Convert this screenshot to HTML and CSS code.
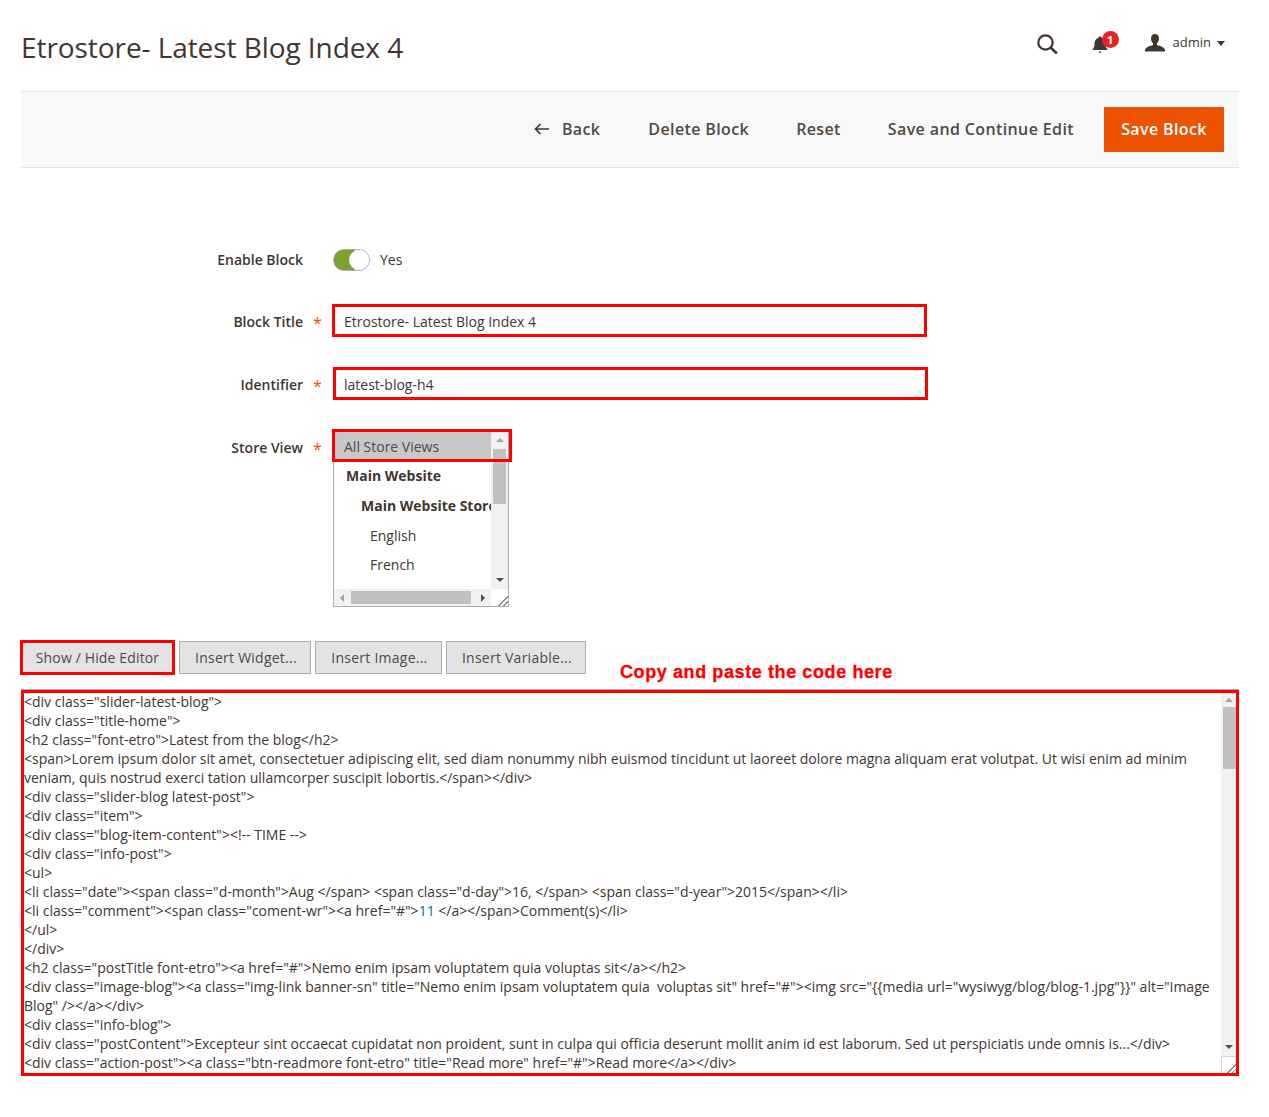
FILE: index.html
```html
<!DOCTYPE html>
<html lang="en">
<head>
<meta charset="utf-8">
<title>Etrostore- Latest Blog Index 4</title>
<link rel="stylesheet" href="styles.css">
</head>
<body>
<div class="page">
  <header class="top">
    <h1 class="title">Etrostore- Latest Blog Index 4</h1>
    <div class="tools">
      <svg class="ico-search" width="21" height="20" viewBox="0 0 21 20"><circle cx="8.500" cy="8.500" r="7.200" fill="none" stroke="#41362f" stroke-width="2.200"/><path d="M13.800 13.800l6 5.700" stroke="#41362f" stroke-width="2.600" fill="none"/></svg>
      <div class="bell">
        <svg width="18" height="20" viewBox="0 0 18 20"><path d="M9 1.500c1 0 1.600.7 1.700 1.600C13.300 3.900 14.500 6 14.500 9c0 3 .8 4.500 2.500 6H1c1.700-1.500 2.500-3 2.500-6 0-3 1.200-5.100 3.800-5.900C7.400 2.200 8 1.500 9 1.500z" fill="#41362f"/><path d="M7.500 16.500h3L9 18.500z" fill="#41362f"/></svg>
        <span class="badge">1</span>
      </div>
      <div class="user">
        <svg width="20" height="18" viewBox="0 0 20 18"><path d="M10 0c2.600 0 4 1.900 4 4.500 0 2-.8 3.800-2 4.800v1.600c2 .9 7.500 1.700 8 5.100v1.500H0v-1.500c.5-3.400 6-4.200 8-5.100V9.300C6.800 8.300 6 6.500 6 4.500 6 1.900 7.400 0 10 0z" fill="#41362f"/></svg>
        <span class="user-name">admin</span>
        <span class="caret"></span>
      </div>
    </div>
  </header>

  <div class="actions">
    <a class="act act-back"><svg width="16" height="12" viewBox="0 0 16 12"><path d="M15 6H2M6.500 1L1.500 6l5 5" fill="none" stroke="#41362f" stroke-width="1.700"/></svg>Back</a>
    <a class="act">Delete Block</a>
    <a class="act">Reset</a>
    <a class="act">Save and Continue Edit</a>
    <a class="btn-save">Save Block</a>
  </div>

  <form class="form">
    <div class="row row-toggle">
      <label class="lbl">Enable Block</label>
      <div class="req"></div>
      <div class="toggle"><span class="knob"></span></div>
      <span class="yes">Yes</span>
    </div>
    <div class="row row-title">
      <label class="lbl">Block Title</label>
      <div class="req">*</div>
      <div class="field field-a">Etrostore- Latest Blog Index 4</div>
    </div>
    <div class="row row-id">
      <label class="lbl">Identifier</label>
      <div class="req">*</div>
      <div class="field field-b">latest-blog-h4</div>
    </div>
    <div class="row row-store">
      <label class="lbl">Store View</label>
      <div class="req">*</div>
      <div class="select">
        <div class="select-main">
          <div class="opts">
            <div class="opt opt-all">All Store Views</div>
            <div class="opt opt-g1">Main Website</div>
            <div class="opt opt-g2">Main Website Store</div>
            <div class="opt opt-v">English</div>
            <div class="opt opt-v">French</div>
          </div>
          <div class="vbar">
            <span class="arr arr-up"></span>
            <div class="vtrack"><span class="vthumb"></span></div>
            <span class="arr arr-down"></span>
          </div>
        </div>
        <div class="hbar">
          <span class="arr arr-left"></span>
          <span class="hthumb"></span>
          <span class="arr arr-right"></span>
          <span class="corner"></span>
        </div>
      </div>
    </div>

    <div class="editor-btns">
      <button type="button" class="ebtn ebtn-red">Show / Hide Editor</button>
      <button type="button" class="ebtn">Insert Widget...</button>
      <button type="button" class="ebtn">Insert Image...</button>
      <button type="button" class="ebtn">Insert Variable...</button>
      <span class="note">Copy and paste the code here</span>
    </div>

    <div class="code">
      <div class="code-text">&lt;div class="slider-latest-blog"&gt;
&lt;div class="title-home"&gt;
&lt;h2 class="font-etro"&gt;Latest from the blog&lt;/h2&gt;
&lt;span&gt;Lorem ipsum dolor sit amet, consectetuer adipiscing elit, sed diam nonummy nibh euismod tincidunt ut laoreet dolore magna aliquam erat volutpat. Ut wisi enim ad minim veniam, quis nostrud exerci tation ullamcorper suscipit lobortis.&lt;/span&gt;&lt;/div&gt;
&lt;div class="slider-blog latest-post"&gt;
&lt;div class="item"&gt;
&lt;div class="blog-item-content"&gt;&lt;!-- TIME --&gt;
&lt;div class="info-post"&gt;
&lt;ul&gt;
&lt;li class="date"&gt;&lt;span class="d-month"&gt;Aug &lt;/span&gt; &lt;span class="d-day"&gt;16, &lt;/span&gt; &lt;span class="d-year"&gt;2015&lt;/span&gt;&lt;/li&gt;
&lt;li class="comment"&gt;&lt;span class="coment-wr"&gt;&lt;a href="#"&gt;<span class="link">11</span> &lt;/a&gt;&lt;/span&gt;Comment(s)&lt;/li&gt;
&lt;/ul&gt;
&lt;/div&gt;
&lt;h2 class="postTitle font-etro"&gt;&lt;a href="#"&gt;Nemo enim ipsam voluptatem quia voluptas sit&lt;/a&gt;&lt;/h2&gt;
&lt;div class="image-blog"&gt;&lt;a class="img-link banner-sn" title="Nemo enim ipsam voluptatem quia  voluptas sit" href="#"&gt;&lt;img src="{{media url="wysiwyg/blog/blog-1.jpg"}}" alt="Image Blog" /&gt;&lt;/a&gt;&lt;/div&gt;
&lt;div class="info-blog"&gt;
&lt;div class="postContent"&gt;Excepteur sint occaecat cupidatat non proident, sunt in culpa qui officia deserunt mollit anim id est laborum. Sed ut perspiciatis unde omnis is...&lt;/div&gt;
&lt;div class="action-post"&gt;&lt;a class="btn-readmore font-etro" title="Read more" href="#"&gt;Read more&lt;/a&gt;&lt;/div&gt;</div>
      <div class="vbar code-bar">
        <span class="arr arr-up"></span>
        <div class="vtrack"><span class="vthumb code-thumb"></span></div>
        <span class="arr arr-down"></span>
        <span class="corner code-corner"></span>
      </div>
    </div>
  </form>
</div>
</body>
</html>
```
FILE: styles.css
```css
* { box-sizing: border-box; }
html, body { margin: 0; padding: 0; background: #fff; }
body { font-family: "Open Sans", "Noto Sans", sans-serif; color: #41362f; font-size: 14px; }
.page { width: 1269px; height: 1117px; padding: 0 30px 0 21px; overflow: hidden; }

.top { height: 91px; display: flex; align-items: flex-start; justify-content: space-between; }
.title { margin: 28px 0 0; font-size: 28px; line-height: 38px; font-weight: 400; letter-spacing: -.07px; color: #41362f; }
.tools { display: flex; align-items: flex-start; margin-top: 34px; padding-right: 14px; }
.ico-search { display: block; margin-right: 33px; }
.bell { position: relative; width: 18px; height: 20px; margin: 1px 36px 0 0; }
.bell svg { display: block; }
.badge { position: absolute; left: 11px; top: -4px; width: 17px; height: 17px; border-radius: 50%; background: #e22626; color: #fff; font-size: 11px; font-weight: 700; line-height: 17px; text-align: center; }
.user { display: flex; align-items: center; height: 18px; }
.user svg { display: block; margin-right: 8px; }
.user-name { font-size: 13px; color: #41362f; margin: 0 6px 2px 0; }
.caret { width: 0; height: 0; border: 4px solid transparent; border-top: 5px solid #41362f; border-bottom: 0; }

.actions { height: 77px; background: #f8f8f8; border-top: 1px solid #e3e3e3; border-bottom: 1px solid #e3e3e3; display: flex; align-items: center; justify-content: flex-end; padding-right: 15px; }
.act { font-size: 16px; font-weight: 600; letter-spacing: .38px; color: #514943; margin: 0 47px 2px 0; display: flex; align-items: center; }
.act:nth-child(4) { margin-right: 30px; }
.act-back { margin-right: 48px; }
.act-back svg { margin-right: 12px; }
.btn-save { width: 120px; height: 45px; background: #eb5202; color: #fff; font-size: 16px; font-weight: 600; letter-spacing: .38px; line-height: 45px; text-align: center; }

.form { display: block; }
.row { display: flex; align-items: flex-start; }
.row-toggle { margin-top: 75px; height: 34px; align-items: center; }
.row-title { margin-top: 27px; }
.row-id { margin-top: 30px; }
.row-store { margin-top: 29px; }
.lbl { width: 282px; text-align: right; font-size: 14px; font-weight: 600; color: #41362f; line-height: 19px; padding-top: 8px; }
.row-toggle .lbl { padding-top: 0; margin-bottom: 2px; }
.row-store .lbl { padding-top: 9px; }
.req { width: 29px; padding: 9px 0 0 10px; color: #eb5202; font-size: 16px; line-height: 20px; }
.row-toggle .req { padding-top: 0; }
.row-store .req { padding-top: 10px; }
.toggle { width: 37px; height: 22px; border-radius: 11px; border: 1px solid #adadad; background: linear-gradient(to right, #79a22e 60%, #fff 60%); position: relative; margin-left: 1px; }
.knob { position: absolute; right: 0; top: 0; width: 20px; height: 20px; background: #fff; border-radius: 50%; }
.yes { margin: 0 0 2px 10px; font-size: 14px; }
.field { height: 33px; border: 3px solid #f00; font-size: 14px; line-height: 27px; padding: 1px 0 0 9px; color: #41362f; }
.field-a { width: 595px; }
.field-b { width: 595px; margin-left: 1px; padding-left: 8px; }

.select { width: 176px; height: 177px; border: 1px solid #adadad; position: relative; margin: 1px 0 0 1px; display: flex; flex-direction: column; background: #fff; }
.select-main { flex: 1; display: flex; min-height: 0; }
.opts { flex: 1; overflow: hidden; white-space: nowrap; font-size: 14px; }
.opt { height: 30px; line-height: 30px; }
.opt-all { height: 30px; line-height: 32px; padding-left: 10px; background: #c8c8c8; color: #514943; }
.opt-all::after { content: ""; box-sizing: border-box; position: absolute; left: -2px; top: -2px; width: 180px; height: 33px; border: 3px solid #f00; }
.opt-g1 { font-weight: 700; padding-left: 12px; }
.opt-g2 { font-weight: 700; padding-left: 27px; }
.opt-v { padding-left: 36px; height: 29px; line-height: 29px; }
.vbar { width: 17px; background: #f1f1f1; display: flex; flex-direction: column; align-items: center; flex: none; }
.vtrack { flex: 1; width: 100%; }
.vthumb { display: block; margin: 0 auto; width: 13px; height: 55px; background: #c1c1c1; }
.arr { flex: none; display: block; width: 0; height: 0; border: 4px solid transparent; }
.arr-up { border-top: 0; border-bottom: 4px solid #a3a3a3; margin: 7px 0; }
.arr-down { border-bottom: 0; border-top: 4px solid #505050; margin: 0 0 7px; }
.hbar { height: 17px; background: #f1f1f1; display: flex; align-items: center; flex: none; }
.arr-left { border-left: 0; border-right: 4px solid #a3a3a3; margin: 0 7px 0 6px; }
.arr-right { border-right: 0; border-left: 4px solid #505050; margin: 0 6px 0 10px; }
.hthumb { width: 120px; height: 13px; background: #c1c1c1; }
.corner { flex: none; width: 17px; height: 17px; margin-left: auto; background: linear-gradient(135deg, #fff 70%, #888 70%, #888 75%, #fff 75%, #fff 85%, #888 85%, #888 90%, #fff 90%); }

.editor-btns { display: flex; align-items: flex-start; margin-top: 34px; height: 49px; }
.ebtn { height: 33px; min-width: 127px; font-family: inherit; font-size: 14px; letter-spacing: .25px; color: #514943; background: #e3e3e3; border: 1px solid #adadad; padding: 0 13px 0 15px; margin: 0 4px 0 0; white-space: nowrap; }
.ebtn-red { width: 155px; height: 35px; border: 3px solid #f00; margin: -1px 4px 0 -1px; padding: 0; letter-spacing: .14px; }
.note { font-family: "Liberation Sans", Arial, sans-serif; margin: 19px 0 0 30px; font-size: 18px; line-height: 24px; font-weight: 700; letter-spacing: .6px; -webkit-text-stroke: .3px #f00; color: #f00; }

.code { width: 1218px; height: 386px; border: 3px solid #f00; display: flex; background: #fff; box-shadow: 0 -1px 0 #adadad; }
.code-text { flex: 1; white-space: pre-wrap; font-size: 14px; line-height: 19px; margin-top: -1px; overflow: hidden; color: #41362f; }
.link { color: #006bb4; }
.code-bar { width: 15px; height: 100%; }
.code-thumb { width: 13px; height: 62px; margin: 0 0 0 2px; }
.code-bar .arr-up { margin: 5px 0; }
.code-corner { margin-left: 0; width: 15px; height: 17px; border-left: 1px solid #d6d6d6; border-top: 1px solid #d6d6d6; }
```
